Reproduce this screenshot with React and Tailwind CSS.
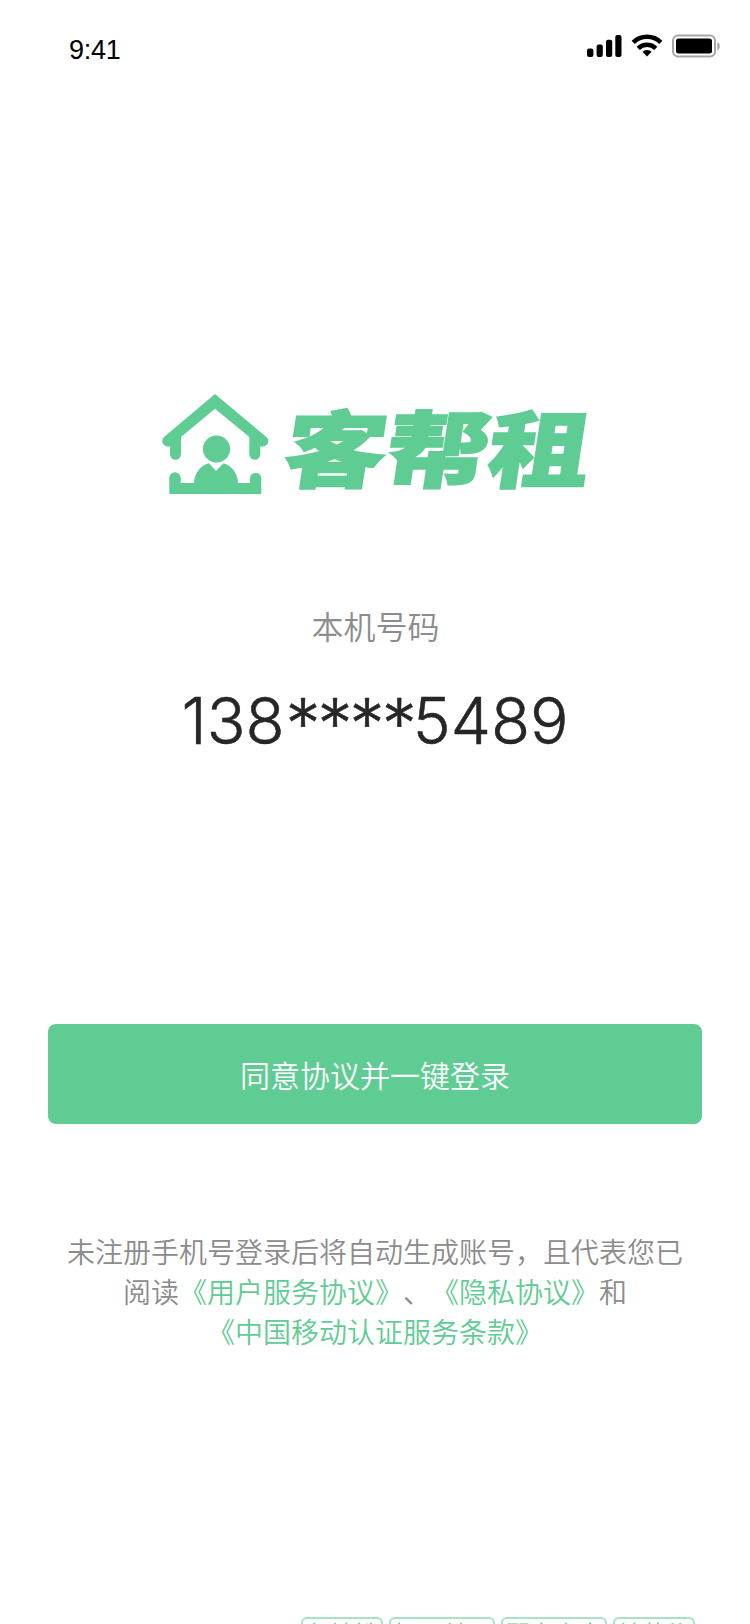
import React from 'react';

const houseTags = ['邻地铁', '押一付一', '配套齐全', '精装修'];

const SignalIcon = () => (
  <svg width="35" height="24" viewBox="0 0 35 24" fill="#000">
    <rect x="0" y="14.5" width="6.4" height="8.4" rx="2" />
    <rect x="9.6" y="10.5" width="6.2" height="12.4" rx="2" />
    <rect x="19" y="5.8" width="6.2" height="17.1" rx="2" />
    <rect x="28.3" y="1" width="6.2" height="21.9" rx="2" />
  </svg>
);

const WifiIcon = () => (
  <svg width="32" height="24" viewBox="0 0 32 24" fill="none" stroke="#000" strokeWidth="4.4">
    <path d="M2.2 8.4 A19.5 19.5 0 0 1 29.8 8.4" />
    <path d="M7.2 14.4 A12.3 12.3 0 0 1 24.8 14.4" />
    <path d="M11.4 17.8 A6.8 6.8 0 0 1 20.6 17.8 L16 22.6 Z" fill="#000" stroke="none" />
  </svg>
);

const BatteryIcon = () => (
  <svg width="50" height="24" viewBox="0 0 50 24">
    <rect x="1" y="1.5" width="42" height="21" rx="5" fill="none" stroke="#a6a6a6" strokeWidth="2" />
    <rect x="4" y="4.5" width="36" height="15" rx="2.5" fill="#000" />
    <path d="M45.3 8 C48.6 9.5 48.6 15 45.3 16.5 Z" fill="#a6a6a6" />
  </svg>
);

const HouseLogo = () => (
  <svg width="108" height="101" viewBox="0 0 108 101" fill="#5fcc94">
    <path d="M53 0 L105 43.5 A5.5 5.5 0 0 1 101 52.5 H98.3 V60.3 A5.5 5.5 0 0 1 87.3 60.3 V43 L53 14.7 L19 43 V60.3 A5.5 5.5 0 0 1 8 60.3 V52.5 H5.3 A5.5 5.5 0 0 1 2 43 Z" />
    <circle cx="54.5" cy="55" r="13.6" />
    <path d="M7.3 100 V84 A5.7 5.7 0 0 1 18.7 84 V89 H32 C32.5 79 38.5 71.5 47 69.3 L54 77 L61.5 69.3 C69.8 72 75.7 79 76 89 H88 V84 A5.7 5.7 0 0 1 99.3 84 V100 Z" />
  </svg>
);

const App = () => {
  return (
    <div className="w-[750px] h-[1624px] overflow-hidden bg-white flex flex-col items-center font-['Noto_Sans_CJK_SC',sans-serif]">
      {/* Status bar */}
      <div className="w-full h-[88px] shrink-0 pl-[69px] pr-[28px] pt-[34px] flex items-start justify-between">
        <span className="pt-px font-['Liberation_Sans',sans-serif] text-[27px] leading-[31px] tracking-[-0.3px] text-black">9:41</span>
        <div className="flex items-start gap-[9px]">
          <SignalIcon />
          <WifiIcon />
          <BatteryIcon />
        </div>
      </div>

      {/* Logo */}
      <div className="mt-[306px] mr-[2px] h-[101px] shrink-0 flex items-start">
        <HouseLogo />
        <h1 className="ml-[22px] h-[101px] flex items-center text-[98px] leading-none font-black text-[#5fcc94] [-webkit-text-stroke:2px_#5fcc94] -skew-x-[7deg] scale-x-[1.04] scale-y-[0.85] whitespace-nowrap">
          客帮租
        </h1>
      </div>

      {/* Phone number */}
      <p className="mt-[106px] shrink-0 pl-px text-[32px] leading-[48px] font-[350] text-[#8c8c8c]">本机号码</p>
      <p className="mt-[32px] h-[81px] shrink-0 font-['Inter',sans-serif] text-[64px] leading-[80px] font-light [-webkit-text-stroke:0.5px_#262626] text-[#262626] whitespace-nowrap">
        138<span className="relative top-[5px] left-px text-[70px] leading-none tracking-[-3px]">****</span>5489
      </p>

      <button className="mt-[262px] w-[654px] h-[100px] shrink-0 rounded-lg bg-[#5fcc94] text-[30px] font-[350] text-white">
        同意协议并一键登录
      </button>

      {/* Agreements */}
      <div className="mt-[107px] shrink-0 text-[28px] leading-[40px] font-[350] text-center text-[#8c8c8c] whitespace-nowrap [text-spacing-trim:space-all]">
        <p>未注册手机号登录后将自动生成账号，且代表您已</p>
        <p>
          阅读<a className="text-[#5fcc94]">《用户服务协议》</a>、<a className="text-[#5fcc94]">《隐私协议》</a>和
        </p>
        <p><a className="text-[#5fcc94]">《中国移动认证服务条款》</a></p>
      </div>

      {/* Tags */}
      <div className="mt-[266px] w-full shrink-0 pl-[301px] flex gap-[6px]">
        {houseTags.map((tag) => (
          <span key={tag} className="px-[3px] rounded-md border-2 border-[#a9e3c5] text-[24px] leading-[28px] font-[350] text-[#5fcc94] whitespace-nowrap">
            {tag}
          </span>
        ))}
      </div>
    </div>
  );
};

export default App;
